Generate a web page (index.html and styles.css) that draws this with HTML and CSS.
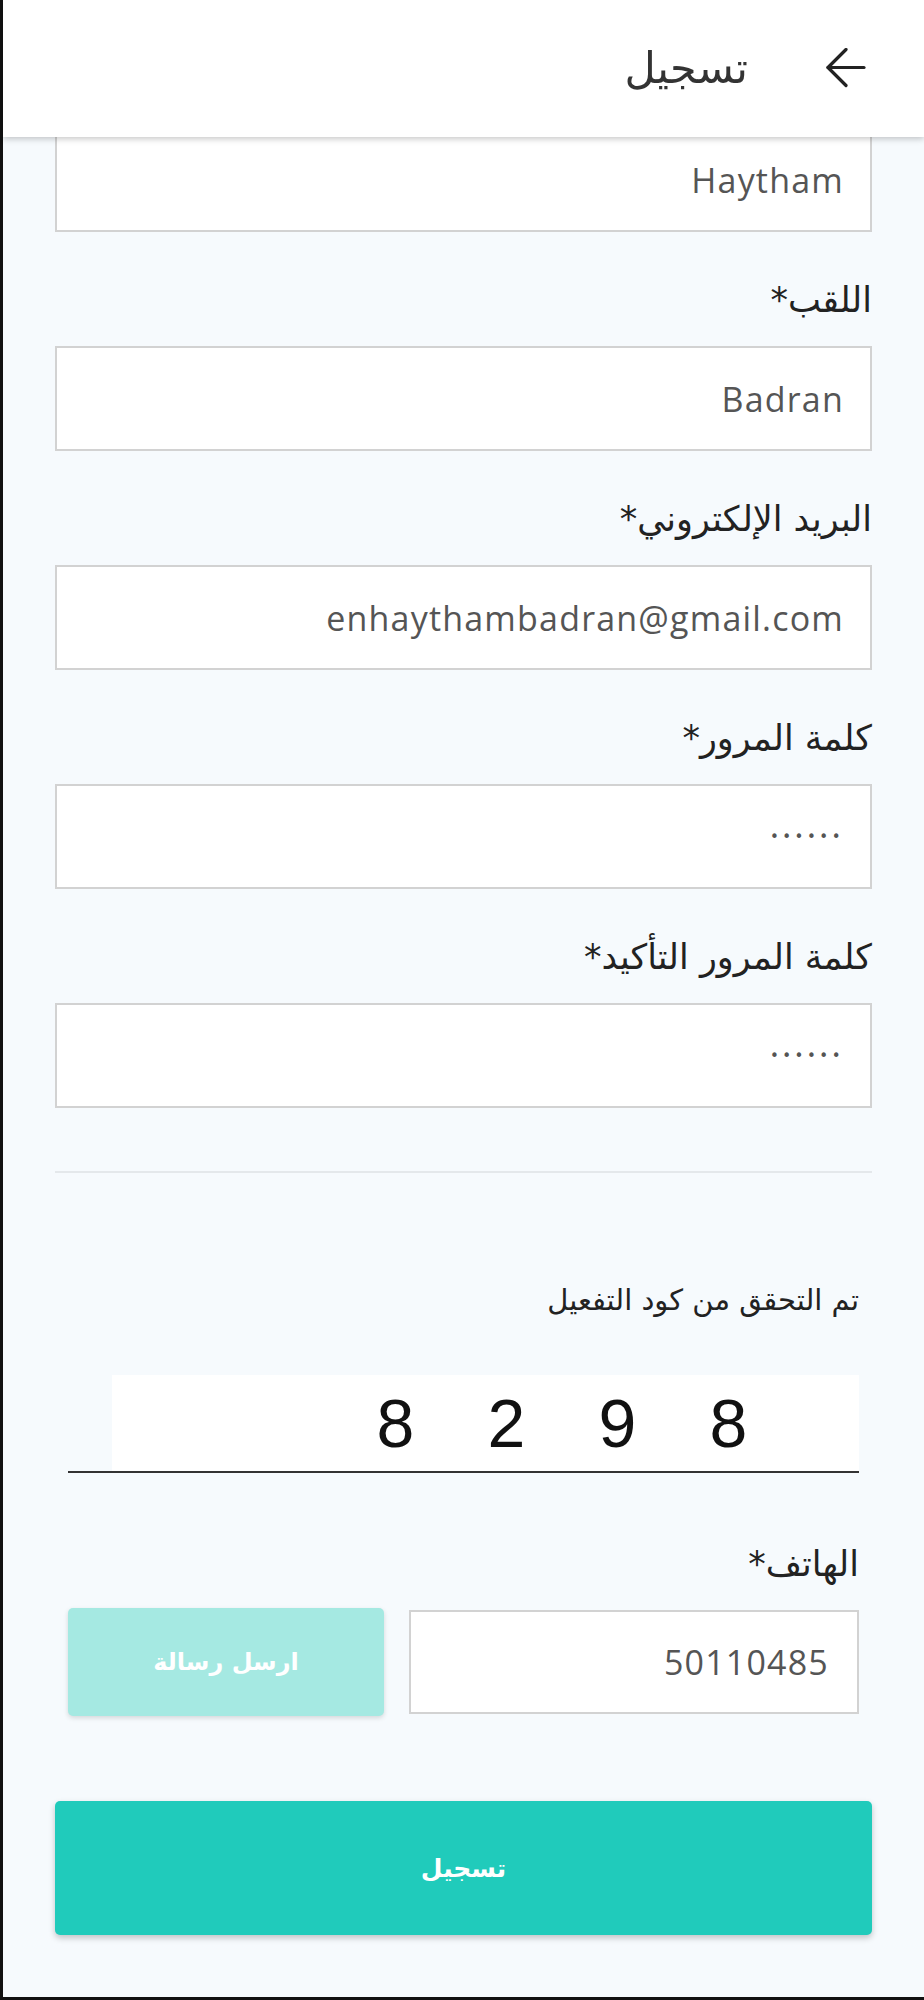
FILE: index.html
```html
<!DOCTYPE html>
<html lang="ar" dir="rtl">
<head>
<meta charset="utf-8">
<meta name="viewport" content="width=device-width, initial-scale=1.0">
<link rel="stylesheet" href="styles.css">
</head>
<body>

<div class="app">
  <header class="topbar">
    <span class="back-btn">
      <svg width="40" height="40" viewBox="0 0 40 40" fill="none" stroke="#222" stroke-width="3.2" stroke-linecap="round" stroke-linejoin="round">
        <path d="M38 19.5H2"/>
        <path d="M20 1.5L2 19.5L20 37.5"/>
      </svg>
    </span>
    <h1 class="topbar-title">تسجيل</h1>
  </header>

  <main class="form">
    <div class="field-box first" dir="ltr">Haytham</div>

    <label class="field-label">اللقب*</label>
    <div class="field-box" dir="ltr">Badran</div>

    <label class="field-label">البريد الإلكتروني*</label>
    <div class="field-box" dir="ltr">enhaythambadran@gmail.com</div>

    <label class="field-label">كلمة المرور*</label>
    <div class="field-box dots" dir="ltr">••••••</div>

    <label class="field-label">كلمة المرور التأكيد*</label>
    <div class="field-box dots" dir="ltr">••••••</div>

    <hr class="divider">

    <section class="verify">
      <p class="verify-note">تم التحقق من كود التفعيل</p>
      <div class="otp">
        <div class="otp-cells" dir="ltr">
          <span>8</span><span>2</span><span>9</span><span>8</span>
        </div>
      </div>

      <label class="field-label phone-label">الهاتف*</label>
      <div class="phone-row">
        <div class="field-box phone" dir="ltr">50110485</div>
        <button class="send-btn">ارسل رسالة</button>
      </div>
    </section>

    <button class="submit-btn">تسجيل</button>
  </main>
</div>

</body>
</html>
```

FILE: styles.css
```css
* {box-sizing: border-box;}
body {
  margin: 0;
  font-family: "DejaVu Sans", "Open Sans", sans-serif;
  background: #f6fafd;
  color: #222;
}
.app {
  height: 2000px;
  border-left: 3px solid #111;
  border-bottom: 3px solid #111;
  overflow: hidden;
  position: relative;
}
.topbar {
  position: fixed;
  top: 0;
  left: 3px;
  right: 0;
  height: 137px;
  background: #fff;
  box-shadow: 0 2px 6px rgba(0,0,0,0.22);
  display: flex;
  align-items: center;
  padding-right: 58px;
  z-index: 10;
}
.back-btn {
  display: flex;
  width: 40px;
  height: 40px;
  margin-top: -2px;
}
.topbar-title {
  margin: 0 78px 0 0;
  font-size: 43px;
  font-weight: normal;
  color: #333;
  line-height: 1;
}
.form {
  padding: 127px 52px 0;
}
.field-label {
  display: block;
  margin: 48px 0 26px;
  font-size: 35px;
  line-height: 40px;
  color: #222;
}
.field-box {
  height: 105px;
  background: #fff;
  border: 2px solid #d2d2d2;
  display: flex;
  align-items: center;
  justify-content: flex-end;
  padding: 0 26px;
  font-family: "Open Sans", sans-serif;
  font-size: 34px;
  letter-spacing: 1.2px;
  color: #555;
}
.field-box.dots {
  font-family: "DejaVu Sans", sans-serif;
  font-size: 15px;
  letter-spacing: 3.5px;
  color: #555;
}
.divider {
  margin: 63px 0 0;
  border: 0;
  border-top: 2px solid #e4e8eb;
}
.verify {
  padding: 0 13px;
}
.verify-note {
  margin: 112px 0 0;
  font-size: 29px;
  line-height: 30px;
  color: #222;
}
.otp {
  margin-top: 60px;
  border-bottom: 2px solid #333;
}
.otp-cells {
  margin-left: 44px;
  height: 96px;
  background: #fff;
  display: flex;
  justify-content: flex-end;
  align-items: center;
  padding-right: 75px;
}
.otp-cells span {
  width: 111px;
  text-align: center;
  font-family: "Liberation Sans", sans-serif;
  font-size: 68px;
  color: #111;
}
.phone-label {
  margin: 71px 0 24px;
}
.phone-row {
  display: grid;
  grid-template-columns: 1fr 316px;
  gap: 25px;
  align-items: center;
}
.field-box.phone {
  height: 104px;
  padding-right: 28px;
}
.send-btn {
  height: 108px;
  border: 0;
  border-radius: 5px;
  background: #a5e9e2;
  color: #fff;
  font-family: "DejaVu Sans", sans-serif;
  font-size: 24px;
  font-weight: bold;
  box-shadow: 0 2px 5px rgba(0,0,0,0.14);
}
.submit-btn {
  display: block;
  width: 100%;
  height: 134px;
  margin-top: 85px;
  border: 0;
  border-radius: 5px;
  background: #20cbbb;
  color: #fff;
  font-family: "DejaVu Sans", sans-serif;
  font-size: 25px;
  font-weight: bold;
  box-shadow: 0 3px 6px rgba(0,0,0,0.22);
}
```
